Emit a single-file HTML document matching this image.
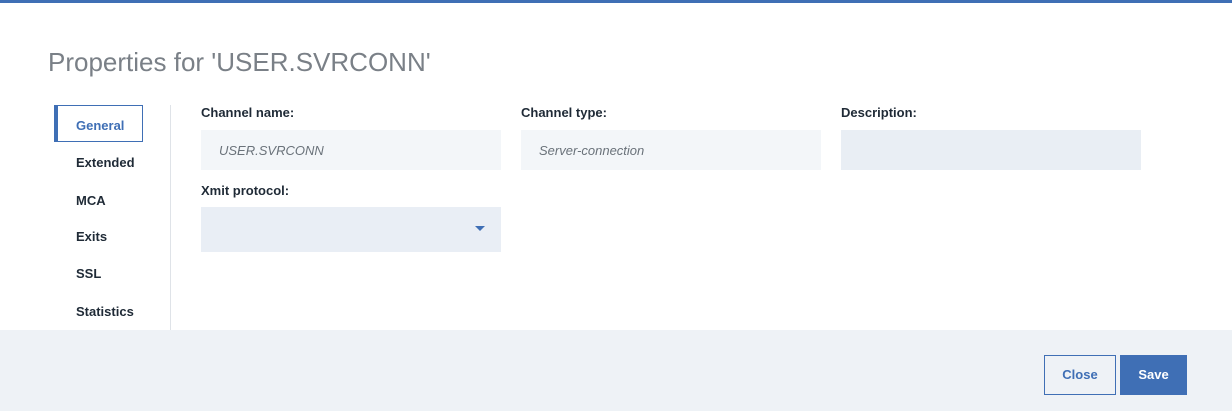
<!DOCTYPE html>
<html><head><style>
body{margin:0;width:1232px;height:411px;position:relative;background:#fff;font-family:"Liberation Sans",sans-serif;overflow:hidden}
.a{position:absolute}
.lbl{font-size:13px;font-weight:bold;color:#1f2a36}
.nav{font-size:13px;font-weight:bold;color:#1f2a36;left:76px}
.inp{background:#f3f6f9;height:40px;width:300px}
.it{font-size:13px;font-style:italic;color:#6a727a}
</style></head><body>
<div class="a" style="left:0;top:0;width:1232px;height:3px;background:#3f6fb5"></div>
<div class="a" style="left:48px;top:47px;font-size:26px;color:#7a8087">Properties for 'USER.SVRCONN'</div>
<div class="a" style="left:54px;top:105px;width:89px;height:37px;border:1px solid #3f6fb5;border-left:4px solid #3f6fb5;box-sizing:border-box"></div>
<div class="a nav" style="top:118px;color:#3f6fb5">General</div>
<div class="a nav" style="top:155px">Extended</div>
<div class="a nav" style="top:193px">MCA</div>
<div class="a nav" style="top:229px">Exits</div>
<div class="a nav" style="top:266px">SSL</div>
<div class="a nav" style="top:304px">Statistics</div>
<div class="a" style="left:170px;top:105px;width:1px;height:225px;background:#dfe3e8"></div>
<div class="a lbl" style="left:201px;top:105px">Channel name:</div>
<div class="a lbl" style="left:521px;top:105px">Channel type:</div>
<div class="a lbl" style="left:841px;top:105px">Description:</div>
<div class="a inp" style="left:201px;top:130px"></div>
<div class="a it" style="left:219px;top:143px">USER.SVRCONN</div>
<div class="a inp" style="left:521px;top:130px"></div>
<div class="a it" style="left:539px;top:143px">Server-connection</div>
<div class="a inp" style="left:841px;top:130px;background:#e9eef4"></div>
<div class="a lbl" style="left:201px;top:183px">Xmit protocol:</div>
<div class="a" style="left:201px;top:207px;width:300px;height:45px;background:#e9eef5"></div>
<div class="a" style="left:475px;top:226px;width:0;height:0;border-left:5px solid transparent;border-right:5px solid transparent;border-top:5px solid #3f6fb5"></div>
<div class="a" style="left:0;top:330px;width:1232px;height:81px;background:#eef2f6"></div>
<div class="a" style="left:1044px;top:355px;width:72px;height:40px;border:1px solid #3f6fb5;box-sizing:border-box;color:#3f6fb5;font-size:13px;font-weight:bold;text-align:center;line-height:38px">Close</div>
<div class="a" style="left:1120px;top:355px;width:67px;height:40px;background:#3f6fb5;color:#fff;font-size:13px;font-weight:bold;text-align:center;line-height:40px">Save</div>
</body></html>
